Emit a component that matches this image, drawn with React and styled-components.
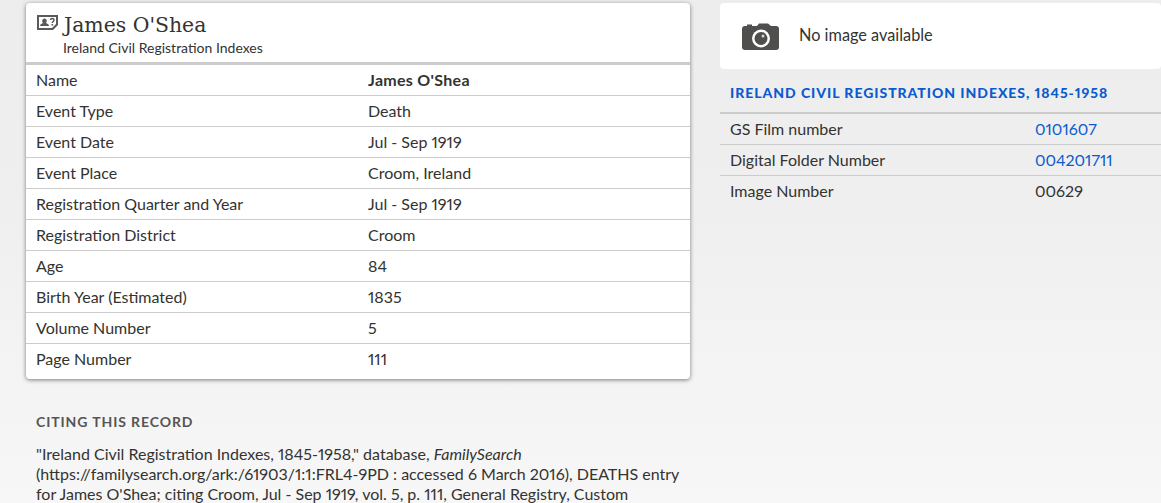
import React from 'react';
import styled, { createGlobalStyle } from 'styled-components';

const GlobalStyle = createGlobalStyle`
  html, body {
    margin: 0;
    padding: 0;
    height: 100%;
  }
  body {
    background: linear-gradient(to bottom, #eeeded 0, #f0efef 200px, #f7f7f7 503px);
    font-family: Lato, "Liberation Sans", sans-serif;
    font-size: 16px;
    font-feature-settings: "pnum";
    color: #333331;
    overflow: hidden;
  }
`;

const Page = styled.div`
  display: grid;
  grid-template-columns: 664px 441px;
  column-gap: 30px;
  padding: 3px 0 0 26px;
  height: 500px;
  overflow: hidden;
`;

const Card = styled.section`
  background: #fff;
  border-radius: 4px;
  box-shadow: 0 1px 4px rgba(0, 0, 0, 0.5);
  padding-bottom: 5px;
`;

const CardHead = styled.header`
  display: flex;
  gap: 4px;
  height: 62px;
  padding: 10px 10px 0 11px;
  box-sizing: border-box;
  border-bottom: 3px solid #cccccc;
`;

const HeadText = styled.div`
  display: flex;
  flex-direction: column;
`;

const Title = styled.h1`
  margin: 0;
  padding-left: 1px;
  font-family: "DejaVu Serif", serif;
  font-weight: 400;
  font-size: 20.4px;
  line-height: 25px;
  color: #333331;
`;

const Subtitle = styled.div`
  font-size: 14px;
  line-height: 20px;
`;

const Row = styled.div`
  display: grid;
  grid-template-columns: ${p => p.$label}px 1fr;
  height: ${p => (p.$first ? 30 : 31)}px;
  box-sizing: border-box;
  padding-left: ${p => p.$pad}px;
  align-items: center;
  border-top: ${p => (p.$first ? 'none' : '1px solid #cccccc')};
  line-height: 30px;
`;

const Value = styled.div`
  font-weight: ${p => (p.$bold ? 700 : 400)};
  letter-spacing: ${p => (p.$bold ? '0.3px' : 'normal')};
`;

const CiteHeading = styled.h2`
  margin: 33px 0 0 10px;
  font-size: 14px;
  line-height: 20px;
  font-weight: 700;
  letter-spacing: 0.9px;
  color: #555553;
`;

const CiteText = styled.p`
  margin: 12px 0 0 10px;
  width: 650px;
  line-height: 20px;
  font-size: 16px;
`;

const NoImage = styled.div`
  display: flex;
  align-items: center;
  gap: 20px;
  height: 66px;
  padding-left: 22px;
  background: #fff;
  border-radius: 4px;
`;

const NoImageText = styled.span`
  margin-top: -4px;
  font-size: 16.3px;
`;

const CollectionLink = styled.a`
  display: block;
  padding: 15px 10px 0;
  height: 45px;
  box-sizing: border-box;
  font-size: 14px;
  line-height: 18px;
  font-weight: 900;
  letter-spacing: 0.95px;
  color: #0b5bd0;
  text-transform: uppercase;
  border-bottom: 2px solid #cccccc;
`;

const Link = styled.span`
  color: #0b5bd0;
`;

const HeadIcon = styled.svg`
  flex: none;
  margin-top: 1px;
`;

const CameraIcon = () => (
  <svg width="37" height="27" viewBox="0 0 37 27" aria-hidden="true">
    <path
      fill="#4f4f4d"
      d="M4 3h1V1.500h5V3h5l2-2.500h9L29 3h5a3 3 0 0 1 3 3v18a3 3 0 0 1-3 3H3a3 3 0 0 1-3-3V6a3 3 0 0 1 3-3z"
    />
    <circle cx="19" cy="15.500" r="9" fill="#fff" />
    <circle cx="19" cy="15.500" r="6.500" fill="#4f4f4d" />
    <circle cx="21" cy="13" r="1.500" fill="#d8d8d8" />
  </svg>
);

const PersonIcon = () => (
  <HeadIcon width="22" height="17" viewBox="0 0 22 17" aria-hidden="true">
    <path
      fill="#5a5a58"
      fillRule="evenodd"
      d="M0 1h21v10l-5 5H0zM2 3v11h13l4-4V3z"
    />
    <path fill="#5a5a58" d="M3 12c0-2 2-2.500 3-3-1-1-1.500-4 1.500-4.500 3 .5 2.500 3.500 1.500 4.500 1 .5 3 1 3 3z" />
    <path fill="none" stroke="#5a5a58" strokeWidth="1.500" d="M13.500 6c0-2 3.500-2 3.500 0 0 1.500-1.700 1.500-1.700 3" />
    <path fill="#5a5a58" d="M14.500 10h1.600v1.600h-1.600z" />
  </HeadIcon>
);

const details = [
  ['Name', "James O'Shea", true],
  ['Event Type', 'Death'],
  ['Event Date', 'Jul - Sep 1919'],
  ['Event Place', 'Croom, Ireland'],
  ['Registration Quarter and Year', 'Jul - Sep 1919'],
  ['Registration District', 'Croom'],
  ['Age', '84'],
  ['Birth Year (Estimated)', '1835'],
  ['Volume Number', '5'],
  ['Page Number', '111']
];

const filmInfo = [
  ['GS Film number', '0101607', true],
  ['Digital Folder Number', '004201711', true],
  ['Image Number', '00629']
];

export default function App() {
  return (
    <>
      <GlobalStyle />
      <Page>
        <div>
          <Card>
            <CardHead>
              <PersonIcon />
              <HeadText>
                <Title>James O'Shea</Title>
                <Subtitle>Ireland Civil Registration Indexes</Subtitle>
              </HeadText>
            </CardHead>
            {details.map(([label, value, bold], i) => (
              <Row key={label} $label={332} $pad={10} $first={i === 0}>
                <div>{label}</div>
                <Value $bold={bold}>{value}</Value>
              </Row>
            ))}
          </Card>
          <CiteHeading>CITING THIS RECORD</CiteHeading>
          <CiteText>
            "Ireland Civil Registration Indexes, 1845-1958," database, <em>FamilySearch</em>{' '}
            (https://familysearch.org/ark:/61903/1:1:FRL4-9PD : accessed 6 March 2016), DEATHS entry
            for James O'Shea; citing Croom, Jul - Sep 1919, vol. 5, p. 111, General Registry, Custom
          </CiteText>
        </div>
        <div>
          <NoImage>
            <CameraIcon />
            <NoImageText>No image available</NoImageText>
          </NoImage>
          <CollectionLink>Ireland Civil Registration Indexes, 1845-1958</CollectionLink>
          {filmInfo.map(([label, value, link], i) => (
            <Row key={label} $label={305} $pad={10} $first={i === 0}>
              <div>{label}</div>
              <div>{link ? <Link>{value}</Link> : value}</div>
            </Row>
          ))}
        </div>
      </Page>
    </>
  );
}
